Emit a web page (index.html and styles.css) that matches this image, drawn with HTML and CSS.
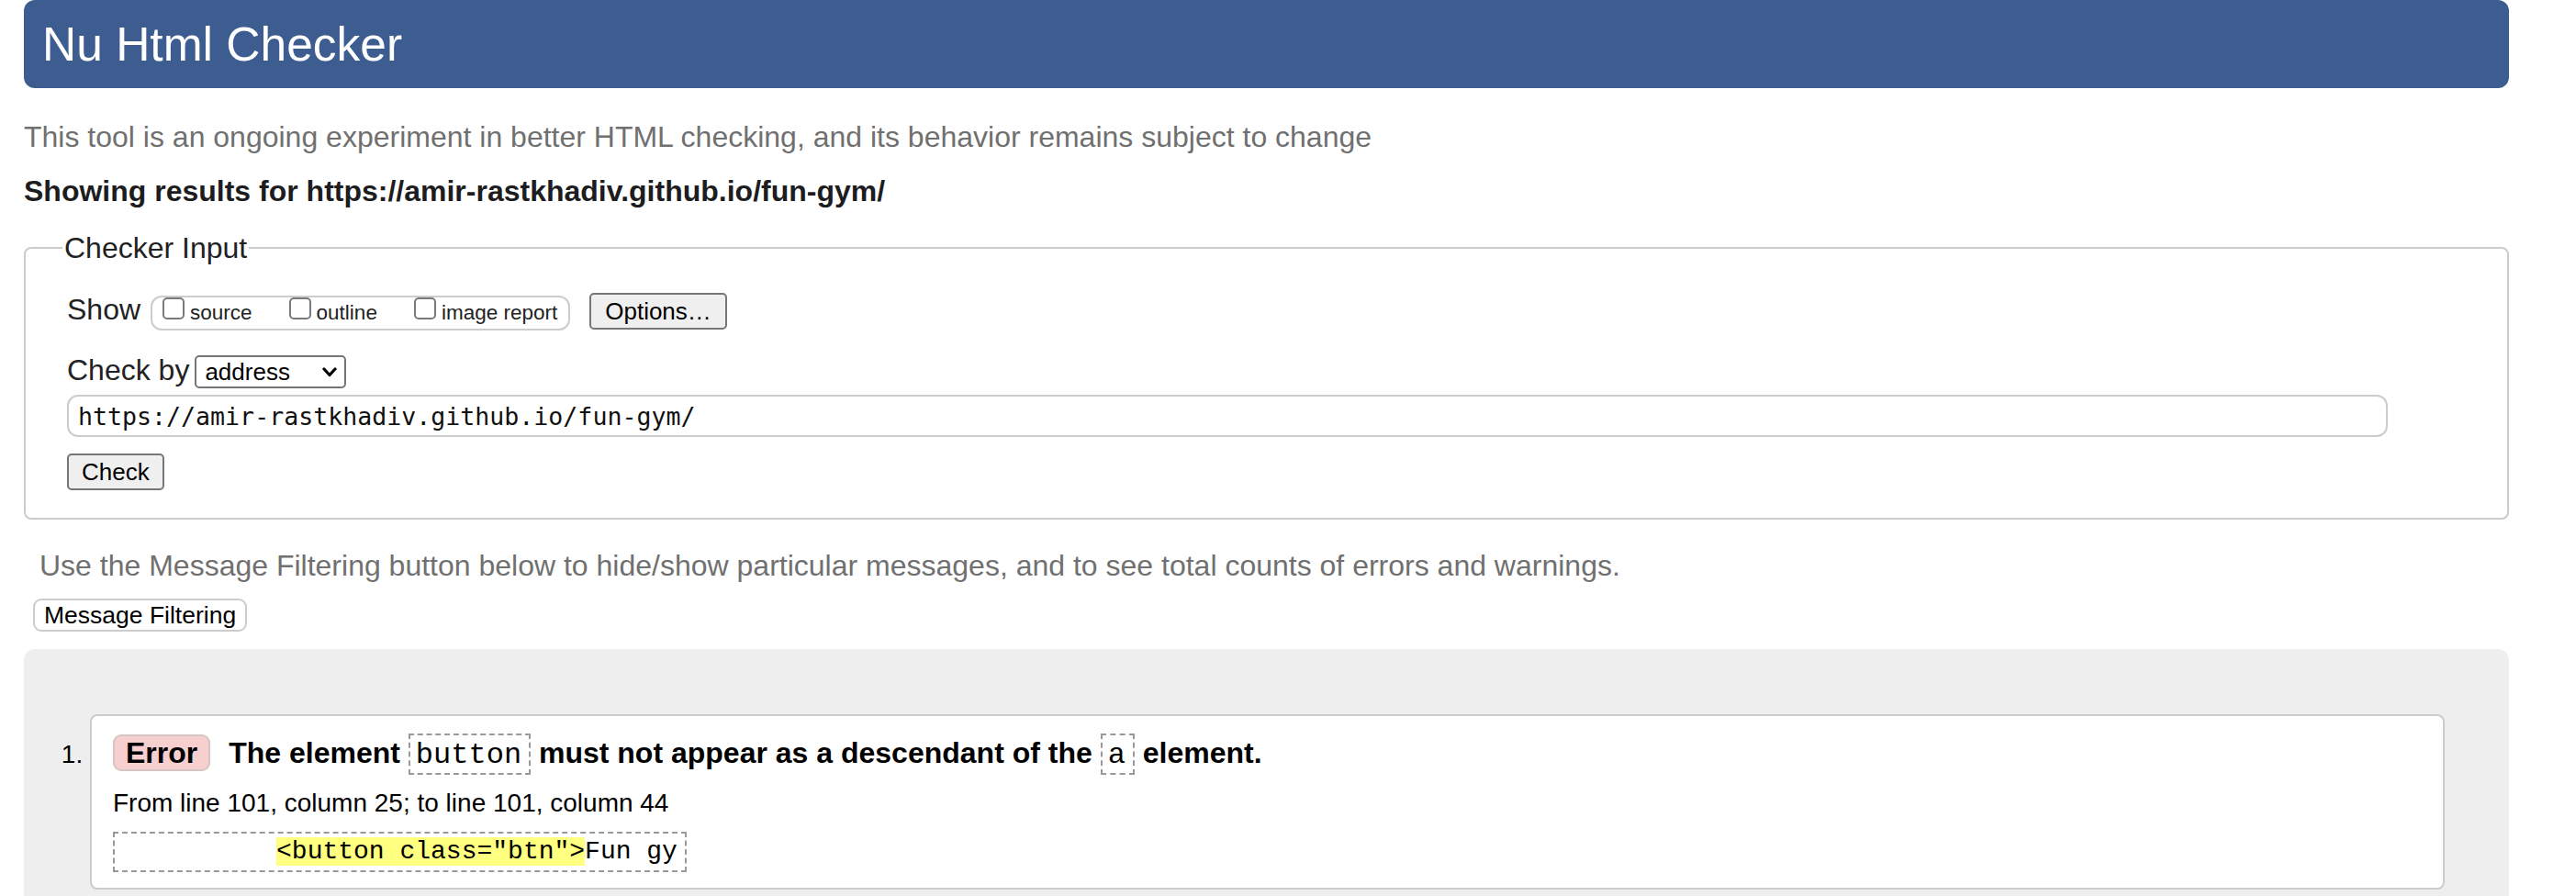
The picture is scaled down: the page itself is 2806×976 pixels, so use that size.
FILE: index.html
```html
<!DOCTYPE html>
<html lang="en">
<head>
<meta charset="utf-8">
<title>Nu Html Checker</title>
<link rel="stylesheet" href="styles.css">
</head>
<body>
<h1 class="masthead">Nu Html Checker</h1>
<p class="intro">This tool is an ongoing experiment in better HTML checking, and its behavior remains subject to change</p>
<p class="showing">Showing results for https://amir-rastkhadiv.github.io/fun-gym/</p>

<form class="checker">
  <fieldset class="checker-input">
    <legend class="checker-legend">Checker Input</legend>
    <div class="row row-show">
      <span class="row-label">Show</span>
      <div class="opts">
        <label class="opt"><input type="checkbox" class="cb"><span class="opt-text">source</span></label>
        <label class="opt"><input type="checkbox" class="cb"><span class="opt-text">outline</span></label>
        <label class="opt"><input type="checkbox" class="cb"><span class="opt-text">image report</span></label>
      </div>
      <button type="button" class="btn btn-options">Options…</button>
    </div>
    <div class="row row-by">
      <span class="row-label label-by">Check by</span>
      <span class="select-wrap">
        <select class="select"><option>address</option></select>
        <svg class="chev" width="16" height="11" viewBox="0 0 16 11"><path d="M2 2 L8 8.5 L14 2" fill="none" stroke="#000" stroke-width="3.2" stroke-linecap="round" stroke-linejoin="round"/></svg>
      </span>
    </div>
    <input class="url" type="text" value="https://amir-rastkhadiv.github.io/fun-gym/">
    <button type="button" class="btn btn-check">Check</button>
  </fieldset>
</form>

<p class="filter-note">Use the Message Filtering button below to hide/show particular messages, and to see total counts of errors and warnings.</p>
<button type="button" class="btn-filter">Message Filtering</button>

<div class="results">
  <ol class="messages">
    <li class="message">
      <p class="msg-title"><span class="badge">Error</span>The element <code class="kw">button</code> must not appear as a descendant of the <code class="kw">a</code> element.</p>
      <p class="msg-loc">From line 101, column 25; to line 101, column 44</p>
      <code class="extract">          <mark class="hl">&lt;button class="btn"&gt;</mark>Fun gy</code>
    </li>
  </ol>
</div>
</body>
</html>
```
FILE: styles.css
```css
html, body {
  margin: 0;
  background: #fff;
}
body {
  padding: 0 73px 0 26px;
  font-family: "Liberation Sans", Arial, Helvetica, sans-serif;
  color: #222;
  overflow: hidden;
}
.masthead {
  margin: 0;
  height: 96px;
  line-height: 96px;
  padding: 0 20px;
  background: #3d5d91;
  color: #fff;
  font-size: 51.5px;
  font-weight: normal;
  border-radius: 12px;
}
.intro {
  margin: 33px 0 0;
  font-size: 32px;
  line-height: 40px;
  color: #707070;
}
.showing {
  margin: 19px 0 0;
  font-size: 32px;
  line-height: 40px;
  font-weight: bold;
  color: #1d1d1f;
}
.checker {
  margin: 0;
}
.checker-input {
  margin: 24px 0 0;
  border: 2px solid #ccc;
  border-radius: 8px;
  padding: 31px 130px 30px 45px;
  min-width: 0;
}
.checker-legend {
  font-size: 32px;
  line-height: 36px;
  padding: 0 2px;
  margin-left: -5px;
  color: #222;
}
.row {
  display: flex;
  align-items: baseline;
}
.row-label {
  font-size: 32px;
  line-height: 36px;
  color: #222;
}
.row-show .row-label {
  margin-right: 11px;
}
.opts {
  display: flex;
  align-items: baseline;
  box-sizing: border-box;
  height: 38px;
  border: 2px solid #ccc;
  border-radius: 12px;
  padding: 0 12px 0 11px;
  font-size: 22.5px;
  line-height: 26px;
  color: #222;
}
.opt {
  display: flex;
  align-items: baseline;
}
.opt + .opt {
  margin-left: 40px;
}
.cb {
  appearance: none;
  -webkit-appearance: none;
  width: 24px;
  height: 24px;
  margin: 0;
  box-sizing: border-box;
  border: 2px solid #7a7a7a;
  border-radius: 5px;
  background: #fff;
}
.opt-text {
  margin-left: 6px;
}
.btn {
  font-family: "Liberation Sans", Arial, sans-serif;
  font-size: 26px;
  height: 40px;
  box-sizing: border-box;
  border: 2px solid #767676;
  border-radius: 5px;
  background: #efefef;
  color: #000;
  line-height: 36px;
}
.btn-options {
  margin-left: 21px;
  padding: 0 15px;
}
.row-by {
  margin-top: 25px;
}
.label-by {
  margin-right: 6px;
}
.select-wrap {
  position: relative;
  display: inline-flex;
}
.select {
  appearance: none;
  -webkit-appearance: none;
  box-sizing: border-box;
  width: 165px;
  height: 36px;
  margin: 0;
  padding: 0 0 0 9px;
  border: 2px solid #767676;
  border-radius: 5px;
  background: #fff;
  color: #000;
  font-family: "Liberation Sans", Arial, sans-serif;
  font-size: 26px;
}
.chev {
  position: absolute;
  right: 10px;
  top: 13px;
  pointer-events: none;
}
.url {
  display: block;
  box-sizing: border-box;
  width: 100%;
  height: 46px;
  margin: 7px 0 0;
  padding: 0 10px;
  border: 2px solid #ccc;
  border-radius: 12px;
  font-family: "DejaVu Sans Mono", "Liberation Mono", monospace;
  font-size: 26.6px;
  color: #111;
  background: #fff;
}
.btn-check {
  display: block;
  margin-top: 18px;
  padding: 0 14px;
}
.filter-note {
  margin: 30px 0 0 17px;
  font-size: 32px;
  line-height: 40px;
  color: #707070;
}
.btn-filter {
  display: block;
  margin: 16px 0 0 10px;
  height: 36px;
  box-sizing: border-box;
  padding: 0 10px;
  border: 2px solid #ccc;
  border-radius: 9px;
  background: #fff;
  color: #000;
  font-family: "Liberation Sans", Arial, sans-serif;
  font-size: 26.5px;
  line-height: 32px;
}
.results {
  margin-top: 19px;
  background: #eee;
  border-radius: 12px 12px 0 0;
  padding: 71px 70px 60px 72px;
}
.messages {
  margin: 0;
  padding: 0;
  list-style: decimal outside;
  font-size: 28px;
  color: #000;
}
.message {
  background: #fff;
  border: 2px solid #ccc;
  border-radius: 8px;
  padding: 20px 23px 17px;
}
.msg-title {
  margin: 0;
  font-size: 32px;
  line-height: 40px;
  font-weight: bold;
  color: #000;
}
.badge {
  display: inline-block;
  box-sizing: border-box;
  height: 40px;
  line-height: 36px;
  padding: 0 12px;
  margin-right: 20px;
  border: 2px solid #d4c4c4;
  border-radius: 9px;
  background: #f7cfcf;
}
.kw {
  font-family: "Liberation Mono", "Courier New", monospace;
  font-weight: normal;
  font-size: 32px;
  padding: 3px 8px 1px 6px;
  border: 2px dashed #999;
}
.msg-loc {
  margin: 14px 0 0;
  font-size: 28px;
  line-height: 36px;
}
.extract {
  display: block;
  width: max-content;
  margin-top: 13px;
  padding: 4px 8px;
  border: 2px dashed #999;
  font-family: "Liberation Mono", "Courier New", monospace;
  font-size: 28px;
  line-height: 32px;
  white-space: pre;
  color: #000;
}
.hl {
  background: #ffff80;
  color: #000;
}
```
